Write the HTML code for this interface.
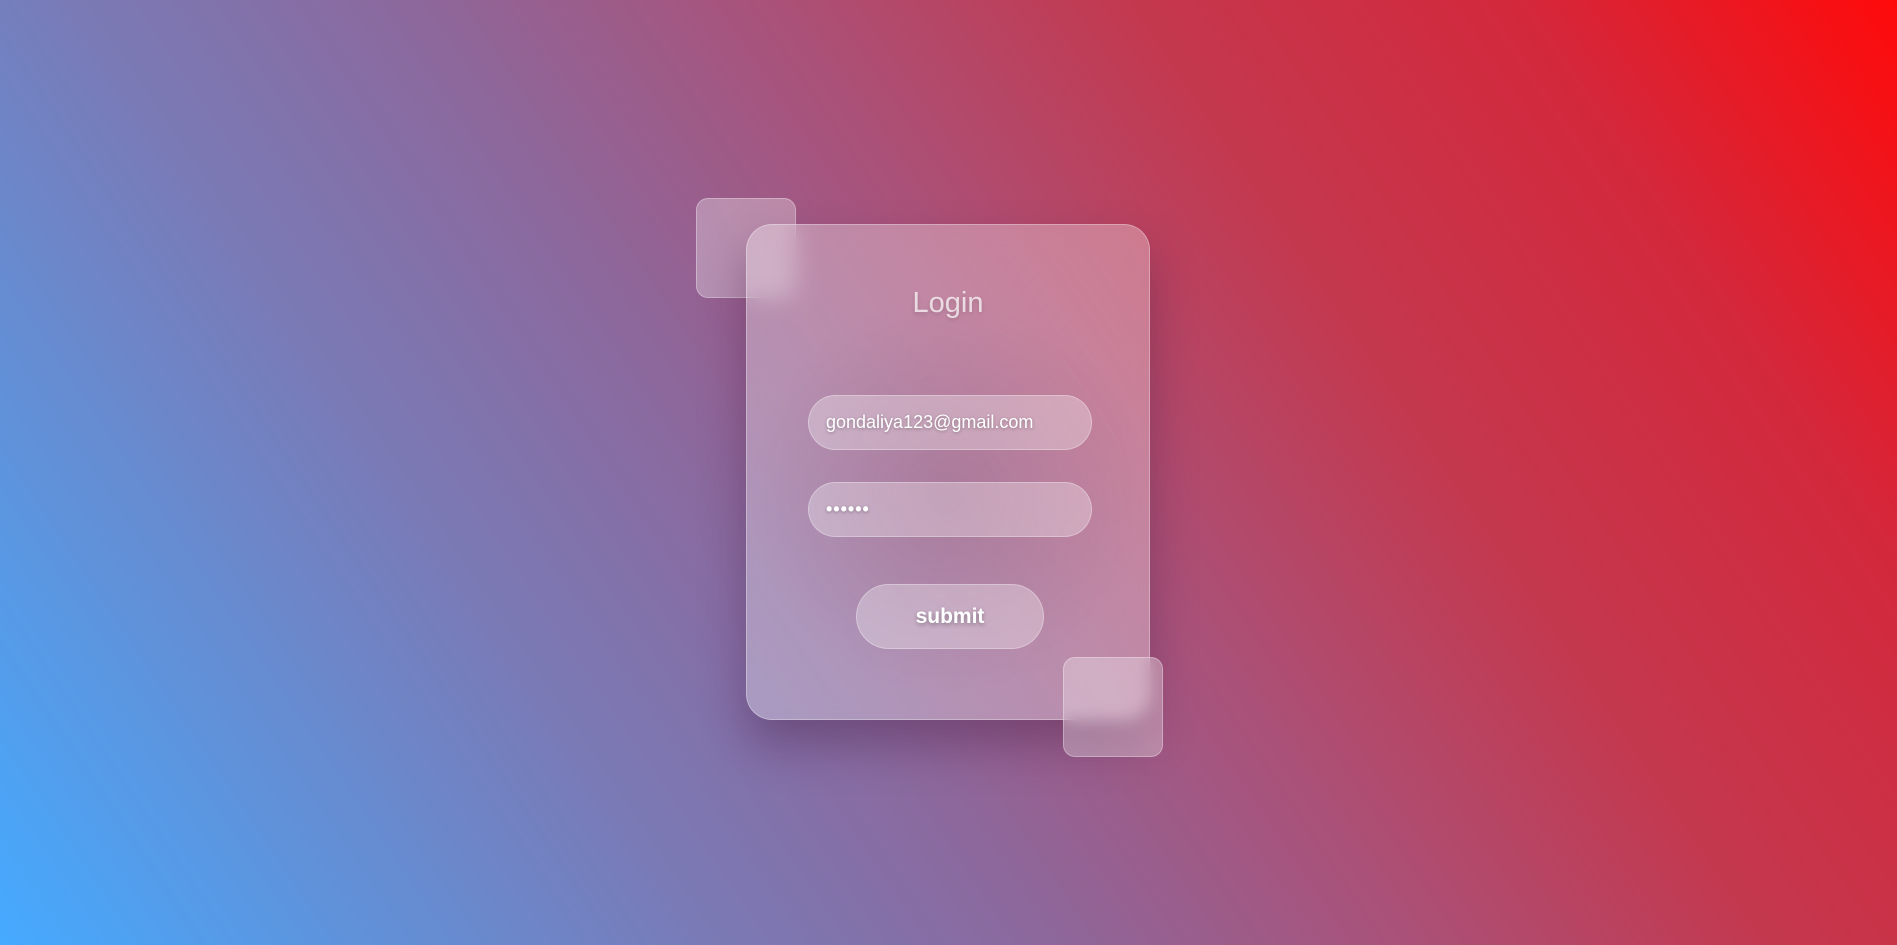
<!DOCTYPE html>
<html><head><meta charset="utf-8"><style>
html,body{margin:0;width:1897px;height:945px;overflow:hidden}
body{background:linear-gradient(56deg,#45aaff 0%,#7a7ab6 28%,#8a6a9f 40%,#a9527a 55%,#c4384e 70%,#d3283c 85%,#ff0a0a 100%);font-family:"Liberation Sans",sans-serif;position:relative}
.card{position:absolute;left:746px;top:224px;width:404px;height:496px;border-radius:26px;
background:radial-gradient(ellipse 50% 40% at 50% 55%,rgba(110,60,100,0.22),rgba(110,60,100,0) 100%),rgba(255,255,255,0.3);
backdrop-filter:blur(12px);
border:1px solid rgba(255,255,255,0.3);box-sizing:border-box;
box-shadow:0 25px 45px rgba(60,20,60,0.35)}
.sq{position:absolute;width:100px;height:100px;border-radius:12px;background:rgba(255,255,255,0.3);border:1px solid rgba(255,255,255,0.3);box-sizing:border-box}
h1{position:absolute;left:0;right:0;top:62px;margin:0;text-align:center;font-weight:normal;font-size:29px;color:rgba(255,255,255,0.72);text-shadow:0 2px 4px rgba(0,0,0,0.15)}
.in{position:absolute;left:61px;width:284px;height:55px;border-radius:28px;background:rgba(255,255,255,0.3);border:1px solid rgba(255,255,255,0.3);box-sizing:border-box;color:#fff;font-size:18px;line-height:53px;padding-left:17px;text-shadow:0 1px 3px rgba(0,0,0,0.3)}
.btn{position:absolute;left:109px;top:359px;width:188px;height:65px;border-radius:33px;background:rgba(255,255,255,0.3);border:1px solid rgba(255,255,255,0.3);box-sizing:border-box;color:#fff;font-size:21px;text-align:center;line-height:63px;font-weight:bold;text-shadow:0 2px 4px rgba(0,0,0,0.3)}
</style></head><body>
<div class="sq" style="left:696px;top:198px"></div>
<div class="card">
<h1>Login</h1>
<div class="in" style="top:170px">gondaliya123@gmail.com</div>
<div class="in" style="top:257px;font-weight:bold;letter-spacing:1px">••••••</div>
<div class="btn">submit</div>
</div>
<div class="sq" style="left:1063px;top:657px;backdrop-filter:blur(8px)"></div>
</body></html>
